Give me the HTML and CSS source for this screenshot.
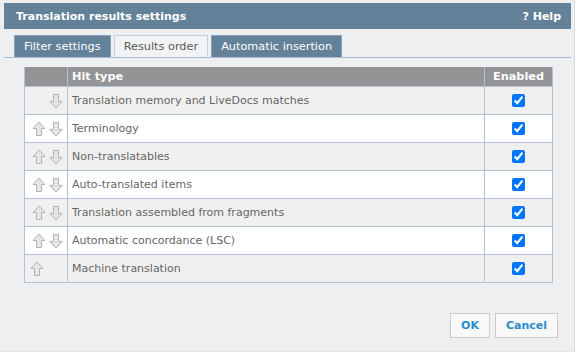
FILE: index.html
```html
<!DOCTYPE html>
<html lang="en">
<head>
    <meta charset="UTF-8">
    <title>Translation results settings</title>
    <link rel="stylesheet" href="styles.css">
</head>
<body>
    <div class="dialog">
        <div class="title-bar">
            <span class="title">Translation results settings</span>
            <span class="help"><span class="help-mark">?</span> Help</span>
        </div>

        <div class="tabs">
            <div class="tab">Filter settings</div>
            <div class="tab active">Results order</div>
            <div class="tab">Automatic insertion</div>
        </div>

        <div class="content">
            <table class="order-table">
                <tr>
                    <th class="col-move"></th>
                    <th class="col-type">Hit type</th>
                    <th class="col-enabled">Enabled</th>
                </tr>
                <tr>
                    <td class="col-move"><span class="arrow blank"></span><svg class="arrow" viewBox="0 0 14 16"><path d="M4.5 1.5h5v7h3.5l-6 6.5-6-6.5h3.5z"/></svg></td>
                    <td class="col-type">Translation memory and LiveDocs matches</td>
                    <td class="col-enabled"><input type="checkbox" checked></td>
                </tr>
                <tr>
                    <td class="col-move"><svg class="arrow" viewBox="0 0 14 16"><path d="M7 1l6 6.5h-3.5v7h-5v-7h-3.5z"/></svg><svg class="arrow" viewBox="0 0 14 16"><path d="M4.5 1.5h5v7h3.5l-6 6.5-6-6.5h3.5z"/></svg></td>
                    <td class="col-type">Terminology</td>
                    <td class="col-enabled"><input type="checkbox" checked></td>
                </tr>
                <tr>
                    <td class="col-move"><svg class="arrow" viewBox="0 0 14 16"><path d="M7 1l6 6.5h-3.5v7h-5v-7h-3.5z"/></svg><svg class="arrow" viewBox="0 0 14 16"><path d="M4.5 1.5h5v7h3.5l-6 6.5-6-6.5h3.5z"/></svg></td>
                    <td class="col-type">Non-translatables</td>
                    <td class="col-enabled"><input type="checkbox" checked></td>
                </tr>
                <tr>
                    <td class="col-move"><svg class="arrow" viewBox="0 0 14 16"><path d="M7 1l6 6.5h-3.5v7h-5v-7h-3.5z"/></svg><svg class="arrow" viewBox="0 0 14 16"><path d="M4.5 1.5h5v7h3.5l-6 6.5-6-6.5h3.5z"/></svg></td>
                    <td class="col-type">Auto-translated items</td>
                    <td class="col-enabled"><input type="checkbox" checked></td>
                </tr>
                <tr>
                    <td class="col-move"><svg class="arrow" viewBox="0 0 14 16"><path d="M7 1l6 6.5h-3.5v7h-5v-7h-3.5z"/></svg><svg class="arrow" viewBox="0 0 14 16"><path d="M4.5 1.5h5v7h3.5l-6 6.5-6-6.5h3.5z"/></svg></td>
                    <td class="col-type">Translation assembled from fragments</td>
                    <td class="col-enabled"><input type="checkbox" checked></td>
                </tr>
                <tr>
                    <td class="col-move"><svg class="arrow" viewBox="0 0 14 16"><path d="M7 1l6 6.5h-3.5v7h-5v-7h-3.5z"/></svg><svg class="arrow" viewBox="0 0 14 16"><path d="M4.5 1.5h5v7h3.5l-6 6.5-6-6.5h3.5z"/></svg></td>
                    <td class="col-type">Automatic concordance (LSC)</td>
                    <td class="col-enabled"><input type="checkbox" checked></td>
                </tr>
                <tr>
                    <td class="col-move left"><svg class="arrow" viewBox="0 0 14 16"><path d="M7 1l6 6.5h-3.5v7h-5v-7h-3.5z"/></svg></td>
                    <td class="col-type">Machine translation</td>
                    <td class="col-enabled"><input type="checkbox" checked></td>
                </tr>
            </table>
        </div>

        <div class="buttons">
            <button class="btn ok">OK</button>
            <button class="btn">Cancel</button>
        </div>
    </div>
</body>
</html>
```

FILE: styles.css
```css
body {
    margin: 0;
    padding: 0;
    background-color: #ffffff;
    font-family: "DejaVu Sans", Verdana, sans-serif;
    font-size: 11px;
}

.dialog {
    width: 575px;
    height: 352px;
    background-color: #eeeff1;
    border-right: 1px solid #d8d9db;
    border-bottom: 1px solid #e4e5e7;
    padding: 3px 0 0 0;
    box-sizing: border-box;
    display: flex;
    flex-direction: column;
}

.title-bar {
    margin: 0 3px 0 4px;
    height: 26px;
    background-color: #64819a;
    color: white;
    font-weight: bold;
    font-size: 11px;
    display: flex;
    align-items: center;
    justify-content: space-between;
    padding: 0 10px 0 12px;
}

.tabs {
    display: flex;
    gap: 3px;
    margin: 6px 3px 0 4px;
    padding-left: 10px;
    border-bottom: 1px solid #a9bcd0;
}

.tab {
    height: 21px;
    line-height: 21px;
    padding: 0 9px;
    background-color: #64819a;
    color: white;
    border: 1px solid #8aa0b4;
    border-bottom: none;
    font-size: 11.3px;
}

.tab.active {
    background-color: #f2f3f5;
    color: #5b5b5b;
    border-color: #c6d0da;
}

.content {
    padding: 9px 0 0 24px;
    flex: 1;
}

.order-table {
    border-collapse: collapse;
    width: 529px;
}

.order-table th {
    background-color: #949496;
    color: white;
    font-weight: bold;
    font-size: 11.3px;
    height: 19px;
    text-align: left;
    border: 1px solid #b0c2d4;
    border-top: none;
    padding: 0 4px;
}

.order-table th.col-enabled {
    text-align: center;
}

.order-table td {
    height: 27px;
    border: 1px solid #b0c2d4;
    color: #666;
    font-size: 11px;
    padding: 0 4px;
}

.order-table tr:nth-child(even) td {
    background-color: #f0f0f0;
}

.order-table tr:nth-child(odd) td {
    background-color: #ffffff;
}

.col-move {
    width: 34px;
    white-space: nowrap;
    text-align: right;
}

.col-move.left {
    text-align: left;
}

.col-enabled {
    width: 59px;
    text-align: center;
}

.arrow {
    display: inline-block;
    width: 14px;
    height: 16px;
    vertical-align: middle;
    margin-left: 3px;
}

.col-move.left .arrow {
    margin-left: 1px;
}

.arrow path {
    fill: #e6e6e6;
    stroke: #b3b3b3;
    stroke-width: 1;
}

.order-table input {
    margin: 0;
    width: 13px;
    height: 13px;
    vertical-align: middle;
    accent-color: #0075ff;
}

.buttons {
    display: flex;
    justify-content: flex-end;
    gap: 5px;
    padding: 0 16px 13px 0;
}

.btn {
    height: 25px;
    padding: 0 10px;
    background-color: #f8f8f8;
    border: 1px solid #cccccc;
    color: #2a8ccc;
    font-family: "DejaVu Sans", Verdana, sans-serif;
    font-weight: bold;
    font-size: 11px;
}

.btn.ok {
    width: 40px;
}

.btn:last-child {
    width: 63px;
}
```
